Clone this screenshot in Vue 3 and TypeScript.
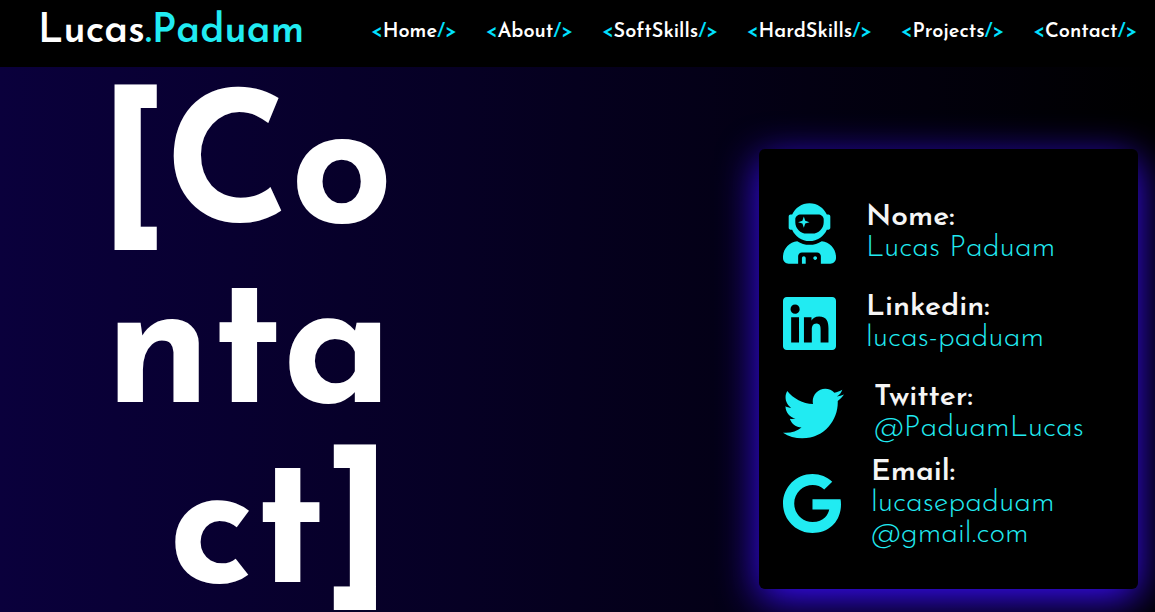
<script setup lang="ts">
interface NavLink {
  label: string
  href: string
}

interface ContactEntry {
  label: string
  lines: string[]
  href?: string
  viewBox: string
  width: number
  path: string
}

const links: NavLink[] = ['Home', 'About', 'SoftSkills', 'HardSkills', 'Projects', 'Contact'].map(
  (label) => ({ label, href: `#${label.toLowerCase()}` }),
)

const contacts: ContactEntry[] = [
  {
    label: 'Nome:',
    lines: ['Lucas Paduam'],
    viewBox: '0 0 448 512',
    width: 53,
    path: 'M64 224h13.5c24.7 56.5 80.9 96 146.5 96s121.8-39.5 146.5-96H384c8.8 0 16-7.2 16-16v-96c0-8.8-7.2-16-16-16h-13.5C345.8 39.5 289.6 0 224 0S102.2 39.5 77.5 96H64c-8.8 0-16 7.2-16 16v96c0 8.8 7.2 16 16 16zm40-88c0-22.1 21.5-40 48-40h144c26.5 0 48 17.9 48 40v24c0 53-43 96-96 96h-48c-53 0-96-43-96-96v-24zm72 72l12-36 36-12-36-12-12-36-12 36-36 12 36 12 12 36zm151.6 113.4C297.7 340.7 262.2 352 224 352s-73.7-11.3-103.6-30.6C52.9 328.5 0 385 0 454.4v9.6c0 26.5 21.5 48 48 48h80v-64c0-17.7 14.3-32 32-32h128c17.7 0 32 14.3 32 32v64h80c26.5 0 48-21.5 48-48v-9.6c0-69.4-52.9-125.9-120.4-133zM272 448c-8.8 0-16 7.2-16 16s7.2 16 16 16 16-7.2 16-16-7.2-16-16-16zm-96 0c-8.8 0-16 7.2-16 16v48h32v-48c0-8.8-7.2-16-16-16z',
  },
  {
    label: 'Linkedin:',
    lines: ['lucas-paduam'],
    href: '#linkedin',
    viewBox: '0 0 448 512',
    width: 53,
    path: 'M416 32H31.9C14.3 32 0 46.5 0 64.3v383.4C0 465.5 14.3 480 31.9 480H416c17.6 0 32-14.5 32-32.3V64.3c0-17.8-14.4-32.3-32-32.3zM135.4 416H69V202.2h66.5V416zm-33.2-243c-21.3 0-38.5-17.3-38.5-38.5S80.9 96 102.2 96c21.2 0 38.5 17.3 38.5 38.5 0 21.3-17.2 38.5-38.5 38.5zm282.1 243h-66.4V312c0-24.8-.5-56.7-34.5-56.7-34.6 0-39.9 27-39.9 54.9V416h-66.4V202.2h63.7v29.2h.9c8.9-16.8 30.6-34.5 62.9-34.5 67.2 0 79.7 44.3 79.7 101.9V416z',
  },
  {
    label: 'Twitter:',
    lines: ['@PaduamLucas'],
    href: '#twitter',
    viewBox: '0 0 512 512',
    width: 61,
    path: 'M459.37 151.716c.325 4.548.325 9.097.325 13.645 0 138.72-105.583 298.558-298.558 298.558-59.452 0-114.68-17.219-161.137-47.106 8.447.974 16.568 1.299 25.34 1.299 49.055 0 94.213-16.568 130.274-44.832-46.132-.975-84.792-31.188-98.112-72.772 6.498.974 12.995 1.624 19.818 1.624 9.421 0 18.843-1.3 27.614-3.573-48.081-9.747-84.143-51.98-84.143-102.985v-1.299c13.969 7.797 30.214 12.67 47.431 13.319-28.264-18.843-46.781-51.005-46.781-87.391 0-19.492 5.197-37.36 14.294-52.954 51.655 63.675 129.3 105.258 216.365 109.807-1.624-7.797-2.599-15.918-2.599-24.04 0-57.828 46.782-104.934 104.934-104.934 30.213 0 57.502 12.67 76.67 33.137 23.715-4.548 46.456-13.32 66.599-25.34-7.798 24.366-24.366 44.833-46.132 57.827 21.117-2.273 41.584-8.122 60.426-16.243-14.292 20.791-32.161 39.308-52.628 54.253z',
  },
  {
    label: 'Email:',
    lines: ['lucasepaduam', '@gmail.com'],
    href: 'mailto:lucasepaduam@gmail.com',
    viewBox: '0 0 488 512',
    width: 58,
    path: 'M488 261.8C488 403.3 391.1 504 248 504 110.8 504 0 393.2 0 256S110.8 8 248 8c66.8 0 123 24.5 166.3 64.9l-67.5 64.9C258.5 52.6 94.3 116.6 94.3 256c0 86.5 69.1 156.6 153.7 156.6 98.2 0 135-70.4 140.8-106.9H248v-85.3h236.1c2.3 12.7 3.9 24.9 3.9 41.4z',
  },
]
</script>

<template>
  <div class="page">
    <header class="header">
      <a class="logo" href="#home">Lucas<span class="accent">.Paduam</span></a>
      <nav class="nav">
        <a v-for="link in links" :key="link.label" class="nav-link" :href="link.href"
          ><span class="tag">&lt;</span>{{ link.label }}<span class="tag">/&gt;</span></a
        >
      </nav>
    </header>

    <main class="contact">
      <h1 class="title">[Contact]</h1>
      <section class="card">
        <div v-for="entry in contacts" :key="entry.label" class="entry">
          <svg class="icon" :width="entry.width" height="61" :viewBox="entry.viewBox" aria-hidden="true">
            <path :d="entry.path" />
          </svg>
          <div class="details">
            <h2 class="label">{{ entry.label }}</h2>
            <component :is="entry.href ? 'a' : 'span'" class="value" :href="entry.href">
              <span v-for="line in entry.lines" :key="line" class="line">{{ line }}</span>
            </component>
          </div>
        </div>
      </section>
    </main>
  </div>
</template>

<style>
body {
  margin: 0;
  background: #000;
}

html {
  scrollbar-width: none;
}
</style>

<style scoped>
.page {
  display: flex;
  flex-direction: column;
  min-height: 100vh;
  font-family: 'Josefin Sans', Lato, sans-serif;
  color: #fff;
}

.header {
  display: flex;
  align-items: center;
  flex: none;
  box-sizing: border-box;
  height: 67px;
  padding: 0 18px 4px 38px;
  background: #000;
}

.logo {
  flex: 0 0 333px;
  font-size: 40px;
  font-weight: 600;
  line-height: 48px;
  color: #fff;
  text-decoration: none;
}

.accent {
  color: #21ebf2;
}

.nav {
  display: flex;
  flex: 1;
  justify-content: space-between;
}

.nav-link {
  font-size: 20px;
  font-weight: 600;
  line-height: 24px;
  color: #fff;
  text-decoration: none;
}

.tag {
  color: #00e1ff;
}

.contact {
  display: flex;
  flex: 1;
  align-items: flex-start;
  justify-content: space-between;
  padding: 0 17px 0 83px;
  overflow: hidden;
  background: linear-gradient(to right, #0a003c, #000);
}

.title {
  width: 310px;
  margin: 20px 0 0;
  font-size: 180px;
  font-weight: 700;
  line-height: 180px;
  text-align: right;
  word-break: break-all;
}

.card {
  display: grid;
  grid-auto-rows: 90px;
  flex: 0 1 331px;
  margin-top: 82px;
  padding: 39px 24px 41px;
  border-radius: 6px;
  background: #000;
  box-shadow: 0 10px 40px #3a0cff;
}

.entry {
  display: flex;
  align-items: center;
  gap: 30px;
}

.icon {
  flex: none;
  fill: #21ebf2;
}

.label {
  margin: 0;
  font-size: 30px;
  font-weight: 600;
  line-height: 31px;
  color: #f5f5f5;
}

.value {
  display: block;
  font-size: 30px;
  font-weight: 300;
  line-height: 31px;
  color: #21ebf2;
  text-decoration: none;
}

.line {
  display: block;
}
</style>
